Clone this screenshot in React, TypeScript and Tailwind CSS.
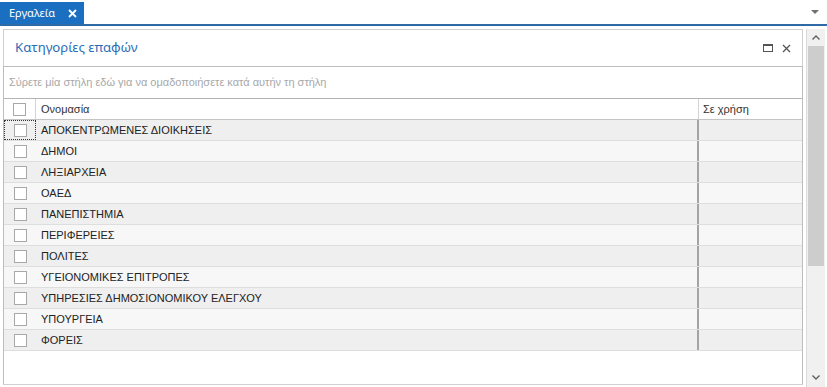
import React from 'react';

const rows = [
  'ΑΠΟΚΕΝΤΡΩΜΕΝΕΣ ΔΙΟΙΚΗΣΕΙΣ',
  'ΔΗΜΟΙ',
  'ΛΗΞΙΑΡΧΕΙΑ',
  'ΟΑΕΔ',
  'ΠΑΝΕΠΙΣΤΗΜΙΑ',
  'ΠΕΡΙΦΕΡΕΙΕΣ',
  'ΠΟΛΙΤΕΣ',
  'ΥΓΕΙΟΝΟΜΙΚΕΣ ΕΠΙΤΡΟΠΕΣ',
  'ΥΠΗΡΕΣΙΕΣ ΔΗΜΟΣΙΟΝΟΜΙΚΟΥ ΕΛΕΓΧΟΥ',
  'ΥΠΟΥΡΓΕΙΑ',
  'ΦΟΡΕΙΣ',
];

const Box = () => <div className="w-[13px] h-[13px] bg-white border border-[#a8a8a8]" />;

export default function App() {
  return (
    <div className="w-[827px] h-[387px] bg-white overflow-hidden flex flex-col" style={{ fontFamily: '"Liberation Sans", "DejaVu Sans", sans-serif' }}>
      {/* tab strip */}
      <div className="h-[24px] flex items-end justify-between shrink-0">
        <div className="h-[22px] w-[84px] bg-[#1b6fc0] text-white text-[11px] flex items-center pl-[9px] gap-[13px]">
          <span style={{ fontFamily: '"Noto Sans", sans-serif' }}>Εργαλεία</span>
          <svg width="9" height="9" viewBox="0 0 9 9"><path d="M1 1 L8 8 M8 1 L1 8" stroke="white" strokeWidth="1.8" /></svg>
        </div>
        <svg className="mr-[8px] mb-[9px]" width="8" height="5" viewBox="0 0 8 5"><path d="M0 0 H8 L4 4 Z" fill="#707070" /></svg>
      </div>
      <div className="h-[2px] bg-[#2f69a6] shrink-0" />

      <div className="flex flex-1 min-h-0 pt-[3px]">
        {/* panel */}
        <div className="flex-1 flex flex-col ml-[3px] mr-[3px] mb-[2px] border border-[#cfcfcf]">
          <div className="h-[36px] flex items-center justify-between pl-[11px] pr-[11px] shrink-0">
            <span className="text-[13.2px] text-[#2a6db5]" style={{ fontFamily: '"Noto Sans", sans-serif' }}>Κατηγορίες επαφών</span>
            <div className="flex items-center gap-[9px]">
              <svg width="10" height="8" viewBox="0 0 10 8"><rect x="0.5" y="0.5" width="9" height="7" fill="none" stroke="#555" /><rect x="0" y="0" width="10" height="2" fill="#555" /></svg>
              <svg width="9" height="9" viewBox="0 0 9 9"><path d="M1 1 L8 8 M8 1 L1 8" stroke="#555" strokeWidth="1.3" /></svg>
            </div>
          </div>
          <div className="flex-1 flex flex-col border-t border-[#bdbdbd] -ml-px -mr-px border-x">
            <div className="h-[32px] flex items-center pl-[5px] text-[11px] text-[#a8a8a8] border-b border-[#b4b4b4]">
              Σύρετε μία στήλη εδώ για να ομαδοποιήσετε κατά αυτήν τη στήλη
            </div>
            <div className="h-[21px] flex text-[11px] text-[#333] border-b border-[#c4c4c4] bg-white">
              <div className="w-[32px] flex items-center justify-center border-r border-[#d4d4d4]"><Box /></div>
              <div className="w-[663px] flex items-center pl-[5px] border-r border-[#d4d4d4]">Ονομασία</div>
              <div className="flex-1 flex items-center pl-[4px]">Σε χρήση</div>
            </div>
            {rows.map((r, i) => (
              <div key={r} className={`h-[21px] flex text-[11px] text-[#222] border-b border-[#dedede] ${i % 2 === 0 ? 'bg-[#efefef]' : 'bg-[#f7f7f7]'}`}>
                <div className={`w-[32px] flex items-center justify-center ${i === 0 ? 'outline-1 outline-dotted outline-[#333] -outline-offset-1' : ''}`}><Box /></div>
                <div className="w-[663px] flex items-center pl-[5px] border-r-2 border-[#a4a4a4]">{r}</div>
                <div className="flex-1" />
              </div>
            ))}
            <div className="flex-1" />
          </div>
        </div>

        {/* scrollbar */}
        <div className="w-[19px] mr-[2px] flex flex-col bg-[#f0f0f0] border-l border-[#dcdcdc]">
          <div className="h-[17px] flex items-center justify-center">
            <svg width="8" height="5" viewBox="0 0 8 5"><path d="M0.5 4.5 L4 1 L7.5 4.5" fill="none" stroke="#606060" strokeWidth="1.4" /></svg>
          </div>
          <div className="h-[220px] mx-[1px] bg-[#cdcdcd]" />
          <div className="flex-1" />
          <div className="h-[20px] flex items-center justify-center">
            <svg width="8" height="5" viewBox="0 0 8 5"><path d="M0.5 0.5 L4 4 L7.5 0.5" fill="none" stroke="#606060" strokeWidth="1.4" /></svg>
          </div>
        </div>
      </div>
    </div>
  );
}
